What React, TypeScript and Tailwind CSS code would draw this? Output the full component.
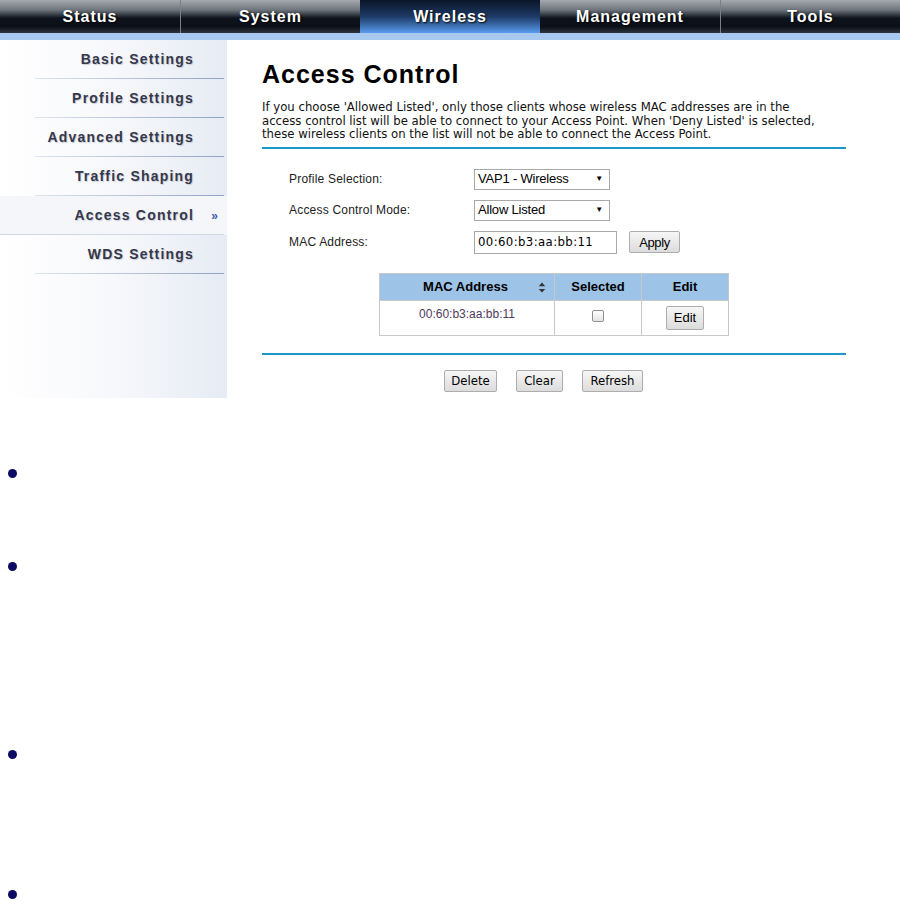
import React from 'react';

// Top navigation tabs of the AP web UI.
const TABS = ['Status', 'System', 'Wireless', 'Management', 'Tools'];

const SIDE_ITEMS = [
  'Basic Settings',
  'Profile Settings',
  'Advanced Settings',
  'Traffic Shaping',
  'Access Control',
  'WDS Settings',
];

const ACTIVE_TAB = 'Wireless';
const ACTIVE_ITEM = 'Access Control';

const TAHOMA = "font-['DejaVu_Sans_Condensed','DejaVu_Sans',sans-serif]";

function Button({ children, className = '' }: { children: React.ReactNode; className?: string }) {
  return (
    <button
      className={`h-[22px] rounded-[2px] border border-[#adadad] bg-gradient-to-b from-[#f6f6f6] to-[#dcdcdc] px-[6px] text-[13px] leading-none text-black ${className}`}
    >
      {children}
    </button>
  );
}

function SelectBox({ value }: { value: string }) {
  return (
    <div className="flex h-[21px] w-[136px] items-center justify-between border border-[#a9a9a9] bg-white pl-[3px] pr-[6px] text-[13px] tracking-[-0.2px] text-black">
      <span>{value}</span>
      <span className="text-[8px]">▼</span>
    </div>
  );
}

function SortIcon() {
  return (
    <svg viewBox="0 0 8 12" className="absolute right-[8px] top-[8px] h-[11px] w-[8px]" aria-hidden="true">
      <path d="M4 0.5 L7.5 4.5 L0.5 4.5 Z" fill="#333" />
      <path d="M4 11.5 L7.5 7.5 L0.5 7.5 Z" fill="#333" />
    </svg>
  );
}

function TopNav() {
  return (
    <div className="flex h-[33px] bg-[#111]">
      {TABS.map((tab, i) => {
        const active = tab === ACTIVE_TAB;
        return (
          <div
            key={tab}
            className={`flex h-full w-[180px] items-center justify-center ${
              i > 0 && !active && TABS[i - 1] !== ACTIVE_TAB ? 'border-l border-[#7a8088]' : ''
            } ${
              active
                ? 'bg-gradient-to-b from-[#0a1628] via-[#1d3a66] to-[#5a9cf0]'
                : 'bg-[linear-gradient(to_bottom,#a4a9af_0%,#6f757d_30%,#0d131c_55%,#0b1018_80%,#2e343c_100%)]'
            }`}
          >
            <span className="text-[16px] font-bold tracking-[1px] text-white [text-shadow:1px_1px_2px_#000]">
              {tab}
            </span>
          </div>
        );
      })}
    </div>
  );
}

function Sidebar() {
  return (
    <div className="w-[227px] shrink-0 bg-gradient-to-r from-white via-[#f7f8fb] to-[#e6ebf4] pb-[124px]">
      {SIDE_ITEMS.map((item) => {
        const active = item === ACTIVE_ITEM;
        return (
          <div
            key={item}
            className={`relative flex h-[39px] items-center justify-end pr-[33px] ${
              active ? 'bg-[#f4f6fa]' : ''
            }`}
          >
            <span className="text-[14px] font-bold tracking-[1.2px] text-[#34384a] [text-shadow:1px_1px_1px_#c8ccd6]">
              {item}
            </span>
            {active && (
              <span className="absolute right-[9px] top-[11px] text-[12px] font-bold text-[#3a5aa8]">»</span>
            )}
            <div
              className={`absolute bottom-0 right-[3px] h-[1px] ${
                active ? 'left-0 bg-[#d0d8e6]' : 'left-[35px] bg-gradient-to-r from-[#dfe5ee] to-[#8ea2c4]'
              }`}
            />
          </div>
        );
      })}
    </div>
  );
}

function Content() {
  return (
    <div className="ml-[35px] w-[584px] pt-[19px]">
      <h1 className="text-[25px] font-bold leading-[30px] tracking-[1px] text-black">Access Control</h1>
      <p className={`mt-[11px] whitespace-nowrap text-[13px] leading-[13.5px] text-[#111] ${TAHOMA}`}>
        If you choose 'Allowed Listed', only those clients whose wireless MAC addresses are in the
        <br />
        access control list will be able to connect to your Access Point. When 'Deny Listed' is selected,
        <br />
        these wireless clients on the list will not be able to connect the Access Point.
      </p>
      <div className="mt-[6px] h-[2px] bg-[#1b98c7]" />

      <div className="ml-[27px] mt-[20px] flex flex-col gap-[10px] text-[12px] text-[#222]">
        <div className="flex h-[21px] items-center">
          <span className="w-[185px] tracking-[0.2px]">Profile Selection:</span>
          <SelectBox value="VAP1 - Wireless" />
        </div>
        <div className="flex h-[21px] items-center">
          <span className="w-[185px] tracking-[0.2px]">Access Control Mode:</span>
          <SelectBox value="Allow Listed" />
        </div>
        <div className="flex h-[23px] items-center">
          <span className="w-[185px] tracking-[0.2px]">MAC Address:</span>
          <div
            className={`flex h-[23px] w-[143px] items-center border border-[#a9a9a9] bg-white px-[3px] text-[13px] tracking-[0.4px] text-black ${TAHOMA}`}
          >
            00:60:b3:aa:bb:11
          </div>
          <Button className="ml-[12px] w-[51px] tracking-[-0.4px]">Apply</Button>
        </div>
      </div>

      <div className="ml-[117px] mt-[19px] w-[350px]">
        <table className="w-full border-collapse text-[13px]">
          <thead>
            <tr className="h-[27px] bg-[#9dc3e6] text-black">
              <th className="relative w-[175px] border border-[#c8c8c8] pr-[3px] font-bold">
                MAC Address
                <SortIcon />
              </th>
              <th className="w-[87px] border border-[#c8c8c8] font-bold">Selected</th>
              <th className="border border-[#c8c8c8] font-bold">Edit</th>
            </tr>
          </thead>
          <tbody>
            <tr className="h-[35px] bg-white">
              <td className="border border-[#c8c8c8] pb-[7px] text-center align-middle text-[12px] text-[#4d3a5a]">
                00:60:b3:aa:bb:11
              </td>
              <td className="border border-[#c8c8c8] pb-[4px] text-center">
                <span className="inline-block h-[12px] w-[12px] rounded-[2px] border border-[#8f8f8f] bg-gradient-to-b from-white to-[#e4e4e4] align-middle" />
              </td>
              <td className="border border-[#c8c8c8] text-center">
                <Button className="h-[24px] w-[38px] px-0">Edit</Button>
              </td>
            </tr>
          </tbody>
        </table>
      </div>

      <div className="mt-[17px] h-[2px] bg-[#1b98c7]" />
      <div className={`ml-[182px] mt-[15px] flex gap-[19px] ${TAHOMA}`}>
        <Button className="w-[53px]">Delete</Button>
        <Button className="w-[47px]">Clear</Button>
        <Button className="w-[61px]">Refresh</Button>
      </div>
    </div>
  );
}

function Bullet({ gap }: { gap: string }) {
  return (
    <div className={`flex pl-[8px] ${gap}`}>
      <span className="h-[9px] w-[9px] rounded-full bg-[#0b0b62]" />
    </div>
  );
}

export default function App() {
  return (
    <div className="h-[901px] w-[900px] overflow-hidden bg-white font-['Liberation_Sans',Arial,sans-serif]">
      <TopNav />
      <div className="h-[7px] bg-[#a9c8ef]" />
      <div className="flex">
        <Sidebar />
        <Content />
      </div>
      <div className="flex flex-col">
        <Bullet gap="mt-[71px]" />
        <Bullet gap="mt-[84px]" />
        <Bullet gap="mt-[179px]" />
        <Bullet gap="mt-[131px]" />
      </div>
    </div>
  );
}
